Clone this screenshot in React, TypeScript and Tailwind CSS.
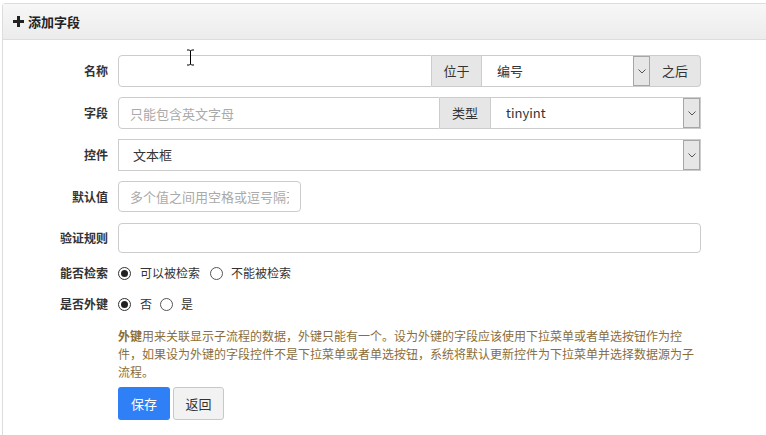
import React from "react";

const font = "font-['Noto_Sans_CJK_SC','Microsoft_YaHei',sans-serif]";

function Chevron() {
  return (
    <svg width="8" height="5" viewBox="0 0 8 5" fill="none">
      <path d="M0.5 0.5 L4 4 L7.5 0.5" stroke="#555" strokeWidth="1" />
    </svg>
  );
}

function ArrowBox() {
  return (
    <div className="w-[17px] h-full bg-[#e6e6e6] border border-[#a6a6a6] flex items-center justify-center shrink-0">
      <Chevron />
    </div>
  );
}

function Label({ children }: { children: React.ReactNode }) {
  return (
    <div className="w-[105px] shrink-0 text-right text-[12px] font-bold text-[#333]">
      {children}
    </div>
  );
}

function Radio({ checked }: { checked?: boolean }) {
  return (
    <span
      className={`w-[13px] h-[13px] rounded-full border bg-white flex items-center justify-center shrink-0 ${
        checked ? "border-[#333]" : "border-[#555]"
      }`}
    >
      {checked && <span className="w-[7px] h-[7px] rounded-full bg-[#222]" />}
    </span>
  );
}

export default function App() {
  return (
    <div
      className={`relative w-[766px] h-[435px] overflow-hidden bg-white pt-[3px] pl-[2px] ${font}`}
    >
      <div className="w-[820px] border border-[#ddd] rounded-t-[3px] h-[460px]">
        <div className="h-[36px] flex items-center pl-[10px] gap-[4px] border-b border-[#ddd] bg-gradient-to-b from-[#f7f7f7] to-[#ececec]">
          <svg width="11" height="11" viewBox="0 0 11 11">
            <path d="M4 0h3v4h4v3H7v4H4V7H0V4h4z" fill="#222" />
          </svg>
          <span className="text-[13px] font-bold text-[#222]">添加字段</span>
        </div>

        <div className="pt-[15px] flex flex-col">
          {/* 名称 */}
          <div className="flex items-center h-[32px]">
            <Label>名称</Label>
            <div className="ml-[10px] w-[583px] h-full flex text-[13px] text-[#333]">
              <input className="w-[314px] h-full border border-[#ccc] rounded-l-[4px] px-[12px] outline-none" />
              <div className="w-[50px] h-full bg-[#e6e6e6] border-y border-r border-[#ccc] flex items-center justify-center">
                位于
              </div>
              <div className="w-[168px] h-full border-y border-[#ccc] flex items-center bg-white">
                <span className="flex-1 pl-[15px]">编号</span>
                <ArrowBox />
              </div>
              <div className="w-[51px] h-full bg-[#e6e6e6] border-y border-r border-[#ccc] rounded-r-[4px] flex items-center justify-center">
                之后
              </div>
            </div>
          </div>

          {/* 字段 */}
          <div className="flex items-center h-[32px] mt-[10px]">
            <Label>字段</Label>
            <div className="ml-[10px] w-[583px] h-full flex text-[13px] text-[#333]">
              <input
                placeholder="只能包含英文字母"
                className="w-[322px] h-full border border-[#ccc] rounded-l-[4px] px-[11px] outline-none placeholder:text-[#aaa]"
              />
              <div className="w-[51px] h-full bg-[#e6e6e6] border-y border-r border-[#ccc] flex items-center justify-center">
                类型
              </div>
              <div className="w-[210px] h-full border-y border-r border-[#ccc] flex items-center bg-white">
                <span className="flex-1 pl-[15px]">tinyint</span>
                <ArrowBox />
              </div>
            </div>
          </div>

          {/* 控件 */}
          <div className="flex items-center h-[32px] mt-[10px]">
            <Label>控件</Label>
            <div className="ml-[10px] w-[583px] h-full flex items-center border border-[#ccc] text-[13px] text-[#333]">
              <span className="flex-1 pl-[14px]">文本框</span>
              <ArrowBox />
            </div>
          </div>

          {/* 默认值 */}
          <div className="flex items-center h-[31px] mt-[10px]">
            <Label>默认值</Label>
            <input
              placeholder="多个值之间用空格或逗号隔开"
              className="ml-[10px] w-[183px] h-full border border-[#ccc] rounded-[4px] px-[11px] text-[13px] outline-none placeholder:text-[#aaa]"
            />
          </div>

          {/* 验证规则 */}
          <div className="flex items-center h-[30px] mt-[11px]">
            <Label>验证规则</Label>
            <input className="ml-[10px] w-[583px] h-full border border-[#ccc] rounded-[4px] px-[12px] text-[13px] outline-none" />
          </div>

          {/* 能否检索 */}
          <div className="flex items-center h-[20px] mt-[10px] text-[12px] text-[#333]">
            <Label>能否检索</Label>
            <div className="ml-[10px] flex items-center">
              <Radio checked />
              <span className="ml-[9px]">可以被检索</span>
              <span className="ml-[10px]"><Radio /></span>
              <span className="ml-[8px]">不能被检索</span>
            </div>
          </div>

          {/* 是否外键 */}
          <div className="flex items-center h-[20px] mt-[11px] text-[12px] text-[#333]">
            <Label>是否外键</Label>
            <div className="ml-[10px] flex items-center">
              <Radio checked />
              <span className="ml-[9px]">否</span>
              <span className="ml-[8px]"><Radio /></span>
              <span className="ml-[8px]">是</span>
            </div>
          </div>

          <div className="ml-[115px] mt-[13px] text-[12px] leading-[18px] text-[#8a6d3b] whitespace-nowrap">
            <div>
              <b>外键</b>用来关联显示子流程的数据，外键只能有一个。设为外键的字段应该使用下拉菜单或者单选按钮作为控
            </div>
            <div>件，如果设为外键的字段控件不是下拉菜单或者单选按钮，系统将默认更新控件为下拉菜单并选择数据源为子</div>
            <div>流程。</div>
          </div>

          <div className="ml-[115px] mt-[6px] flex gap-[3px] text-[13px]">
            <button className="w-[52px] h-[33px] rounded-[3px] bg-[#2f7ff6] text-white">
              保存
            </button>
            <button className="w-[51px] h-[33px] rounded-[3px] bg-[#f2f2f2] border border-[#c8c8c8] text-[#333]">
              返回
            </button>
          </div>
        </div>
      </div>

      {/* mouse cursor */}
      <svg
        className="absolute left-[186px] top-[49px]"
        width="9"
        height="17"
        viewBox="0 0 9 17"
      >
        <path
          d="M1 1h2.5L4.5 2L5.5 1H8M4.5 2v13M1 16h2.5L4.5 15L5.5 16H8"
          stroke="#000"
          strokeWidth="1"
          fill="none"
        />
      </svg>
    </div>
  );
}
